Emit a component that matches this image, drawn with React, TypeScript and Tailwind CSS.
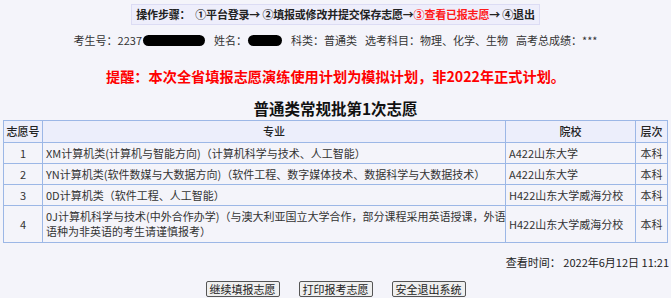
import * as React from "react";

const rows = [
  {
    no: "1",
    major: "XM计算机类(计算机与智能方向)（计算机科学与技术、人工智能）",
    school: "A422山东大学",
    level: "本科",
  },
  {
    no: "2",
    major: "YN计算机类(软件数媒与大数据方向)（软件工程、数字媒体技术、数据科学与大数据技术）",
    school: "A422山东大学",
    level: "本科",
  },
  {
    no: "3",
    major: "0D计算机类（软件工程、人工智能）",
    school: "H422山东大学威海分校",
    level: "本科",
  },
];

function Blob({ w }: { w: number }) {
  return (
    <span
      className="mx-[1px] inline-block h-[11px] rounded-[6px] bg-black align-[-1px]"
      style={{ width: w }}
    />
  );
}

function Btn({ label }: { label: string }) {
  return (
    <button className="h-[16px] whitespace-nowrap rounded-[2px] border border-[#555] bg-[#efefef] px-[3px] text-[11px] leading-[13px] text-[#222]">
      {label}
    </button>
  );
}

export default function App() {
  return (
    <div className="min-h-[298px] w-full overflow-hidden bg-[#f4f4fa] pt-[4px] text-[#333] font-['Noto_Sans_CJK_SC',sans-serif]">
      <div className="mx-auto flex h-[21px] w-[409px] items-center justify-center whitespace-nowrap border border-[#dcdcf4] bg-[#eeeefb] text-[11px] font-bold tracking-[-0.2px] text-[#222]">
        <span>操作步骤：</span>
        <span className="ml-[5px]">①平台登录→ ②填报或修改并提交保存志愿→ </span>
        <span className="text-[#ff1a1a]">③查看已报志愿</span>
        <span>→ ④退出</span>
      </div>

      <div className="mt-[7px] text-center text-[11px] leading-[16px] whitespace-nowrap">
        考生号：2237
        <Blob w={62} />
        <span className="ml-[8px]">姓名：</span>
        <Blob w={34} />
        <span className="ml-[8px]">科类：普通类</span>
        <span className="ml-[8px]">选考科目：物理、化学、生物</span>
        <span className="ml-[8px]">高考总成绩：***</span>
      </div>

      <div className="mt-[18px] text-center text-[14.2px] font-bold leading-[20px] text-[#ff0000]">
        提醒：本次全省填报志愿演练使用计划为模拟计划，非2022年正式计划。
      </div>

      <div className="mt-[12px] text-center text-[15.5px] font-bold leading-[20px] text-[#111]">
        普通类常规批第1次志愿
      </div>

      <table className="mt-[2px] ml-[3px] w-[664px] table-fixed border-collapse border border-[#9cb7e6] text-[11px] leading-[15px]">
        <thead>
          <tr className="h-[22px] bg-[#eceefb] text-[#222]">
            <th className="w-[39px] whitespace-nowrap border border-[#9cb7e6] p-0 font-medium">志愿号</th>
            <th className="w-[463px] border border-[#9cb7e6] p-0 font-medium">专业</th>
            <th className="w-[130px] border border-[#9cb7e6] p-0 font-medium">院校</th>
            <th className="w-[32px] whitespace-nowrap border border-[#9cb7e6] p-0 font-medium">层次</th>
          </tr>
        </thead>
        <tbody>
          {rows.map((r) => (
            <tr key={r.no} className="h-[21px]">
              <td className="border border-[#9cb7e6] p-0 text-center">{r.no}</td>
              <td className="whitespace-nowrap border border-[#9cb7e6] py-0 pl-[3px]">{r.major}</td>
              <td className="whitespace-nowrap border border-[#9cb7e6] py-0 pl-[3px]">{r.school}</td>
              <td className="whitespace-nowrap border border-[#9cb7e6] p-0 text-center">{r.level}</td>
            </tr>
          ))}
          <tr className="h-[37px]">
            <td className="border border-[#9cb7e6] p-0 text-center">4</td>
            <td className="border border-[#9cb7e6] py-0 pl-[3px]">
              <span className="whitespace-nowrap">
                0J计算机科学与技术(中外合作办学)（与澳大利亚国立大学合作，部分课程采用英语授课，外语
              </span>
              <br />
              语种为非英语的考生请谨慎报考）
            </td>
            <td className="whitespace-nowrap border border-[#9cb7e6] py-0 pl-[3px]">H422山东大学威海分校</td>
            <td className="whitespace-nowrap border border-[#9cb7e6] p-0 text-center">本科</td>
          </tr>
        </tbody>
      </table>

      <div className="mt-[11px] whitespace-nowrap pr-[2px] text-right text-[11px] leading-[16px] text-[#222]">
        查看时间： 2022年6月12日 11:21
      </div>

      <div className="mt-[11px] flex justify-center gap-[19px]">
        <Btn label="继续填报志愿" />
        <Btn label="打印报考志愿" />
        <Btn label="安全退出系统" />
      </div>
    </div>
  );
}
